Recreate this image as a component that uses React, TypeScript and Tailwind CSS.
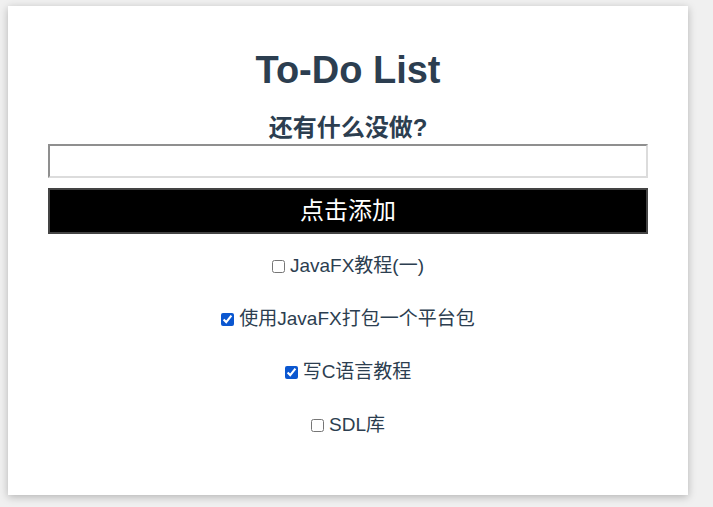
import React, { useState } from 'react';

type Todo = { id: number; text: string; done: boolean };

const INITIAL: Todo[] = [
  { id: 1, text: 'JavaFX教程(一)', done: false },
  { id: 2, text: '使用JavaFX打包一个平台包', done: true },
  { id: 3, text: '写C语言教程', done: true },
  { id: 4, text: 'SDL库', done: false },
];

const App: React.FC = () => {
  const [todos, setTodos] = useState<Todo[]>(INITIAL);
  const [draft, setDraft] = useState('');

  const addTodo = () => {
    if (!draft.trim()) return;
    setTodos(prev => [...prev, { id: Date.now(), text: draft.trim(), done: false }]);
    setDraft('');
  };

  const toggle = (id: number) => {
    setTodos(prev => prev.map(t => (t.id === id ? { ...t, done: !t.done } : t)));
  };

  return (
    <div className="min-h-screen w-full bg-[#f0f0f0] pt-[6px] pl-[8px] font-['Liberation_Sans','Noto_Sans_CJK_SC',sans-serif] text-[#2c3e50]">
      <div className="w-[680px] bg-white shadow-[0_2px_8px_rgba(0,0,0,0.25)] px-[40px] pt-[42px] pb-[43px] flex flex-col items-center">
        {/* Header */}
        <h1 className="text-[38px] leading-[44px] font-bold">To-Do List</h1>
        <h2 className="mt-[22px] text-[24px] leading-[28px] font-bold">还有什么没做?</h2>

        {/* Input + button */}
        <input
          value={draft}
          onChange={e => setDraft(e.target.value)}
          className="mt-[2px] w-[600px] h-[34px] border-2 border-t-[#8f8f8f] border-l-[#8f8f8f] border-b-[#dcdcdc] border-r-[#dcdcdc] bg-white px-1 text-[16px] outline-none"
        />
        <button
          onClick={addTodo}
          className="mt-[10px] w-[600px] h-[46px] bg-black border-2 border-[#444] text-white text-[24px] leading-none cursor-pointer"
        >
          点击添加
        </button>

        {/* Items */}
        <ul className="w-full flex flex-col items-center">
          {todos.map(t => (
            <li key={t.id} className="h-[53px] flex items-center justify-center gap-[5px] first:mt-[6px] text-[19px]">
              <input
                type="checkbox"
                checked={t.done}
                onChange={() => toggle(t.id)}
                className="w-[13px] h-[13px] accent-[#0b57d0]"
              />
              <span>{t.text}</span>
            </li>
          ))}
        </ul>
      </div>
    </div>
  );
};

export default App;
